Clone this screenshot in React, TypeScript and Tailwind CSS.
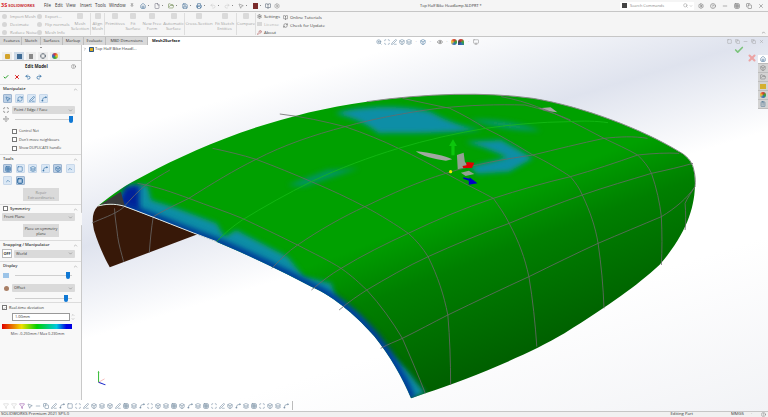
import React from 'react';
import {
  Check, X, Undo2, Redo2, Pin, ChevronUp, ChevronDown, Settings, CircleHelp, Search, Minus, Square, House, File,
  FolderOpen, Save, Printer, MousePointer2, BookOpen, RefreshCw, Wrench, Eye, ZoomIn, Monitor, Box, Copy, Filter,
  PenLine, Move, Grid3x3, Spline, ClipboardList, Scan, Layers, Crosshair,
} from 'lucide-react';

const font = "font-['Open_Sans','Liberation_Sans',sans-serif]";

const SURFACE =
  'M20 408 C60 370 90 345 140 315 C280 225 480 130 700 95 C850 70 1000 65 1120 85 C1250 110 1400 180 1490 245 C1520 265 1530 290 1530 340 C1530 410 1510 490 1440 585 C1380 650 1320 700 1200 790 C1100 860 950 930 848 970 L812 985 C790 920 760 860 720 800 C680 745 620 680 560 650 C480 600 400 555 320 515 C240 480 170 445 85 408 C60 400 40 402 20 408Z';

const wires = [
  'M5 459 C30 445 60 435 83 414 C105 385 120 365 144 342 C165 325 185 312 202 300',
  'M120 340 C170 350 210 368 250 385 C300 408 345 425 385 445 C430 470 480 498 525 525 C565 550 605 572 635 595 C665 620 680 638 700 660 C735 705 765 755 790 805 C810 860 830 915 848 970',
  'M310 235 C350 245 385 255 420 268 C470 290 515 312 560 335 C610 360 655 385 695 410 C735 435 775 465 805 490 C825 510 842 535 855 560 C880 620 895 675 905 735 C910 805 912 875 912 945',
  'M480 132 C540 140 595 155 645 170 C695 190 740 212 780 235 C825 260 865 285 900 310 C945 340 985 362 1020 385 C1035 410 1050 435 1060 460 C1085 515 1100 565 1110 620 C1120 690 1126 760 1130 830',
  'M790 85 C830 95 870 105 910 115 C945 135 975 155 1000 175 C1045 200 1085 230 1120 255 C1155 275 1190 300 1215 320 C1228 338 1238 355 1245 375 C1265 425 1278 470 1285 520 C1293 585 1298 650 1300 715',
  'M1040 80 C1075 88 1105 98 1130 110 C1160 122 1185 136 1210 150 C1240 168 1270 186 1300 205 C1330 222 1360 238 1385 255 C1400 272 1412 290 1420 310 C1433 355 1441 398 1445 440 C1447 490 1447 540 1445 585',
  'M1490 245 C1510 258 1520 272 1525 290 C1531 315 1532 335 1530 350 C1520 370 1510 385 1505 400 C1507 430 1507 455 1505 480',
  'M150 548 C152 515 155 475 160 440 C185 422 215 405 250 385 C310 340 365 300 420 268 C490 225 565 195 645 170 C720 145 800 128 880 115 C960 105 1030 103 1100 105 C1145 118 1180 132 1215 150',
  'M460 595 C480 570 500 545 525 525 C580 480 640 440 695 410 C765 370 830 335 900 310 C975 282 1045 268 1120 255 C1180 238 1240 220 1300 205 C1340 200 1375 198 1410 205',
  'M560 660 C585 635 610 612 635 595 C690 555 750 520 805 490 C875 450 945 415 1020 385 C1085 360 1150 338 1215 320 C1275 300 1330 278 1385 255 C1425 250 1460 248 1490 250',
  'M630 720 C655 695 680 675 700 660 C750 625 800 590 855 560 C920 525 990 490 1060 460 C1120 430 1185 400 1245 375 C1305 350 1365 330 1420 310 C1460 300 1495 290 1525 280',
  'M735 835 C755 822 772 815 790 805 C830 782 868 757 905 735 C975 695 1045 655 1110 620 C1170 585 1230 550 1285 520 C1340 492 1395 465 1445 440 C1480 415 1510 385 1530 350',
  'M62 415 C63 445 68 475 70 500 C73 525 80 552 85 575',
];

// model surface, drawn in zoomed reference coordinates
const Model = () => (
  <svg
    viewBox="0 0 1568 1020"
    preserveAspectRatio="none"
    className="absolute left-[8px] top-[33px] h-[340px] w-[620px]"
  >
    <defs>
      <linearGradient id="green" gradientUnits="userSpaceOnUse" x1="970" y1="400" x2="1160" y2="820">
        <stop offset="0" stopColor="#00a000" />
        <stop offset="0.35" stopColor="#007f00" />
        <stop offset="1" stopColor="#006000" />
      </linearGradient>
      <clipPath id="surface">
        <path d={SURFACE} />
      </clipPath>
      <filter id="soft" x="-20%" y="-20%" width="140%" height="140%">
        <feGaussianBlur stdDeviation="7 8" />
      </filter>
    </defs>
    <path d="M20 408 C5 425 5 450 10 480 C20 520 35 560 50 592 L272 493 L85 408 C60 400 40 402 20 408Z" fill="#371808" />
    <path d={SURFACE} fill="url(#green)" />
    <g clipPath="url(#surface)">
      <g filter="url(#soft)" fill="#0a8ea6">
        <path d="M620 130 C680 105 800 105 860 125 C900 150 940 170 990 180 C900 190 800 190 730 190 C700 160 660 140 620 130Z" />
        <path d="M960 150 C1020 145 1090 160 1140 182 C1080 185 1020 170 960 150Z" opacity="0.7" />
        <path d="M950 215 L1040 210 L1120 265 L1060 305 L980 312 L960 290 L1055 262 L1000 235Z" />
        <path d="M500 345 L600 300 L680 295 L590 330 L540 350Z" opacity="0.6" />
        <path d="M60 400 L100 345 L145 345 L155 390 L220 415 L320 460 L340 500 L370 480 L500 560 L540 620 L610 640 L620 680 L680 740 L740 830 L800 900 L848 970 L812 985 L720 800 L560 650 L320 515Z" />
      </g>
      <path
        d="M85 408 C170 445 240 480 320 515 C400 555 480 600 560 650 C620 680 680 745 720 800 C760 860 790 920 812 985"
        fill="none"
        stroke="#00409c"
        strokeWidth="26"
        filter="url(#soft)"
      />
      <path d="M70 400 L90 350 L125 345 L125 420Z" fill="#00209a" filter="url(#soft)" />
      <path d="M20 408 L78 365 L88 408 C60 400 40 402 20 408Z" fill="#3a3a3a" />
      <path d="M1135 115 L1165 112 L1182 127 L1150 122Z" fill="#a8a8a8" />
    </g>
    <path
      d="M700 95 C850 70 1000 65 1120 85 C1250 110 1400 180 1490 245"
      fill="none"
      stroke="#8a8a8a"
      strokeWidth="1"
      vectorEffect="non-scaling-stroke"
    />
    <g fill="none" stroke="#6a6a6a" strokeWidth="0.8">
      {wires.map((d) => (
        <path key={d} d={d} vectorEffect="non-scaling-stroke" />
      ))}
      <path
        d="M320 515 C340 490 360 470 385 450 C440 410 500 370 560 335 C630 295 705 262 780 235 C850 210 925 190 1000 175 C1070 163 1140 156 1210 155 C1250 152 1280 153 1310 158"
        stroke="#16bb16"
        vectorEffect="non-scaling-stroke"
      />
    </g>
    <path d="M20 408 C40 402 60 400 85 408 C170 445 240 480 320 515" fill="none" stroke="#e6e6e6" strokeWidth="1" vectorEffect="non-scaling-stroke" />
    {/* manipulator */}
    <path d="M824 244 C860 248 900 258 916 268 L900 272 C870 268 840 258 824 244Z" fill="#a2a8a2" />
    <path d="M928 255 L945 248 L948 275 L958 290 L930 298Z" fill="#93a093" />
    <path d="M938 308 L958 302 L972 312 L950 318Z" fill="#93a093" />
    <path d="M918 208 L928 228 L922 228 L922 256 L914 256 L914 228 L908 228Z" fill="#0cc60c" />
    <path d="M942 288 L952 286 L952 276 L972 278 L966 294 L944 294Z" fill="#e00000" />
    <path d="M944 322 L960 326 L960 322 L980 340 L958 344 L958 332 L944 326Z" fill="#0000c8" />
    <ellipse cx="912" cy="305" rx="4" ry="5" fill="#f4f000" />
  </svg>
);

const Triad = () => (
  <svg viewBox="0 0 14 18" className="absolute left-[14px] top-[333px] h-[16px] w-[12px]">
    <path d="M3 14 L3 3" stroke="#10b010" strokeWidth="1" />
    <path d="M3 14 L11 17" stroke="#1020c8" strokeWidth="1.2" />
    <path d="M3 14 L10 10" stroke="#f09090" strokeWidth="0.7" />
    <path d="M2 3 L3 0.5 L4 3Z" fill="#10b010" />
  </svg>
);

const menu = [
  { label: 'File', w: 'w-[11px]' },
  { label: 'Edit', w: 'w-[11px]' },
  { label: 'View', w: 'w-[14px]' },
  { label: 'Insert', w: 'w-[15px]' },
  { label: 'Tools', w: 'w-[14px]' },
  { label: 'Window', w: 'w-[20px]' },
];

const quick = [
  <House key="h" size={6} className="text-[#2a5d8a]" />,
  <File key="n" size={6} className="text-[#667]" />,
  <FolderOpen key="o" size={6} className="text-[#5c7a3a]" />,
  <Save key="s" size={6} className="text-[#2a5d8a]" />,
  <Printer key="p" size={6} className="text-[#2a5d8a]" />,
  <Undo2 key="u" size={6} className="text-[#c4c4c4]" />,
  <Redo2 key="r" size={6} className="text-[#c4c4c4]" />,
  <MousePointer2 key="c" size={6} className="text-[#777]" />,
  <span key="x" className="h-[6px] w-[5px] bg-[#7a2b2b]" />,
];

const TitleBar = () => (
  <div className="flex h-[11px] shrink-0 items-center bg-[#f5f5f5] text-[4.4px] text-[#333]">
    <div className="ml-[1px] flex w-[43px] shrink-0 items-center gap-[1px]">
      <span className="text-[5.5px] font-bold leading-none text-[#d8232a]">3S</span>
      <span className="text-[4px] font-bold leading-none text-[#c8282c]">SOLIDWORKS</span>
    </div>
    <div className="flex w-[94px] shrink-0 items-center">
      {menu.map((m) => (
        <span key={m.label} className={m.w}>
          {m.label}
        </span>
      ))}
      <Pin size={4} className="ml-[1px] text-[#555]" />
    </div>
    <div className="flex w-[282px] shrink-0 items-center">
      {quick.map((icon, i) => (
        <span key={i} className="flex h-[8px] w-[14px] items-center">
          <span className="flex w-[10px] justify-center">{icon}</span>
          <span className="h-[1px] w-[1px] bg-[#888]" />
        </span>
      ))}
      <BookOpen size={6} className="ml-[1px] text-[#456]" />
      <Settings size={6} className="ml-[3px] text-[#888]" />
    </div>
    <span className="w-[200px] shrink-0 text-[3.9px]">Top Half Bike Headlamp.SLDPRT *</span>
    <div className="flex h-[8px] w-[74px] shrink-0 items-center bg-white pl-[2px] text-[#888]">
      <span className="h-[5px] w-[5px] bg-[#444]" />
      <span className="ml-[3px] flex-1 text-[3.9px]">Search Commands</span>
      <Search size={5} />
      <ChevronDown size={4} className="ml-[1px] mr-[1px]" />
    </div>
    <div className="flex items-center pl-[1px] text-[#666]">
      {[Settings, CircleHelp, Minus, Grid3x3, Copy, X].map((Icon, i) => (
        <span key={i} className="flex w-[12px] justify-center">
          <Icon size={6} />
        </span>
      ))}
    </div>
  </div>
);

const RibbonItem = ({ label }: { label: string }) => (
  <div className="flex items-center gap-[3px] text-[#a3a3a3]">
    <span className="h-[5px] w-[5px] shrink-0 rounded-full bg-[#d6d6d6]" />
    <span>{label}</span>
  </div>
);

const RibbonTool = ({ lines, width }: { lines: string[]; width: string }) => (
  <div className={`flex shrink-0 flex-col items-center pt-[1px] leading-[5.2px] text-[#a3a3a3] ${width}`}>
    <span className="mb-[2px] h-[6px] w-[6px] rounded-[1px] bg-[#dadada]" />
    {lines.map((l) => (
      <span key={l}>{l}</span>
    ))}
  </div>
);

const Divider = () => <div className="my-[1px] w-px shrink-0 bg-[#dedede]" />;

const Ribbon = () => (
  <div className="flex h-[26px] shrink-0 border-y border-[#c6c6c6] bg-[#f5f5f5] text-[4.3px]">
    <div className="flex w-[37px] shrink-0 flex-col justify-around pl-[2px]">
      <RibbonItem label="Import Mesh" />
      <RibbonItem label="Decimate" />
      <RibbonItem label="Reduce Noise" />
    </div>
    <div className="flex w-[33px] shrink-0 flex-col justify-around">
      <RibbonItem label="Export..." />
      <RibbonItem label="Flip normals" />
      <RibbonItem label="Mesh Info" />
    </div>
    <RibbonTool lines={['Mesh', 'Selection']} width="w-[20px]" />
    <Divider />
    <RibbonTool lines={['Align', 'Mesh']} width="w-[13px]" />
    <Divider />
    <RibbonTool lines={['Primitives']} width="w-[20px]" />
    <RibbonTool lines={['Fit', 'Surface']} width="w-[16px]" />
    <RibbonTool lines={['New Free', 'Form']} width="w-[22px]" />
    <RibbonTool lines={['Automatic', 'Surface']} width="w-[21px]" />
    <Divider />
    <RibbonTool lines={['Cross-Section']} width="w-[28px]" />
    <RibbonTool lines={['Fit Sketch', 'Entities']} width="w-[23px]" />
    <Divider />
    <RibbonTool lines={['Compare']} width="w-[18px]" />
    <Divider />
    <div className="flex w-[27px] shrink-0 flex-col justify-around pl-[1px] text-[#444]">
      <div className="flex items-center gap-[2px]">
        <Settings size={5} />
        Settings
      </div>
      <div className="flex items-center gap-[2px] text-[#b4b4b4]">
        <span className="h-[4px] w-[5px] bg-[#d8d8d8]" />
        License
      </div>
      <div className="flex items-center gap-[2px]">
        <Wrench size={5} className="text-[#a03030]" />
        About
      </div>
    </div>
    <div className="flex flex-col gap-[2px] pt-[2px] text-[#444]">
      <div className="flex items-center gap-[2px]">
        <BookOpen size={5} />
        Online Tutorials
      </div>
      <div className="flex items-center gap-[2px]">
        <RefreshCw size={5} />
        Check for Update
      </div>
    </div>
    <ChevronUp size={5} className="ml-auto mr-[2px] mt-[18px] text-[#555]" />
  </div>
);

const tabs = [
  { label: 'Features', w: 'w-[20px]' },
  { label: 'Sketch', w: 'w-[19px]' },
  { label: 'Surfaces', w: 'w-[22px]' },
  { label: 'Markup', w: 'w-[21px]' },
  { label: 'Evaluate', w: 'w-[22px]' },
  { label: 'MBD Dimensions', w: 'w-[42px]' },
];

const Tabs = () => (
  <div className="absolute left-0 top-0 z-10 flex h-[8px] items-center bg-[#d9d9d9] pl-[2px] text-[4px] text-[#333]">
    {tabs.map((t) => (
      <span key={t.label} className={`flex h-full items-center justify-center border-r border-[#bdbdbd] ${t.w}`}>
        {t.label}
      </span>
    ))}
    <span className="flex h-[9px] w-[36px] items-center justify-center bg-white font-bold text-[#222]">Mesh2Surface</span>
  </div>
);

const SectionHead = ({ title, children }: { title: string; children?: React.ReactNode }) => (
  <div className="flex h-[9px] items-center justify-between border-t border-[#dcdcdc] px-[3px] text-[4.1px] font-semibold text-[#333]">
    <span className="flex items-center gap-[1px]">
      {children}
      {title}
    </span>
    <ChevronUp size={5} className="text-[#777]" />
  </div>
);

const Select = ({ label, className = '' }: { label: string; className?: string }) => (
  <div className={`flex h-[8px] items-center justify-between rounded-[1px] bg-[#dadada] px-[2px] text-[3.9px] text-[#333] ${className}`}>
    <span>{label}</span>
    <ChevronDown size={5} className="text-[#666]" />
  </div>
);

const Slider = ({ rest }: { rest: string }) => (
  <div className="flex h-[8px] flex-1 items-center">
    <div className="h-px flex-1 bg-[#cfcfcf]" />
    <div className="h-[7px] w-[4px] rounded-b-[2px] bg-[#0f78d4]" />
    <div className={`h-px bg-[#cfcfcf] ${rest}`} />
  </div>
);

const Checkbox = ({ label }: { label: string }) => (
  <div className="flex h-[8.5px] items-center gap-[2px] pl-[12px] text-[3.7px] text-[#444]">
    <span className="h-[5px] w-[5px] border border-[#777] bg-white" />
    {label}
  </div>
);

const ToolButton = ({ active = false, children }: { active?: boolean; children: React.ReactNode }) => (
  <div
    className={`flex h-[9px] w-[9px] items-center justify-center rounded-[1px] border ${
      active ? 'border-[#9db4cf] bg-[#bcd0e6]' : 'border-[#c8d8ea] bg-[#dbe8f5]'
    } text-[#1d5f99]`}
  >
    {children}
  </div>
);

const PanelButton = ({ lines, muted = false }: { lines: string[]; muted?: boolean }) => (
  <div className={`ml-[23px] flex h-[13px] w-[36px] flex-col items-center justify-center bg-[#dadada] text-[3.7px] leading-[5px] ${muted ? 'text-[#8c8c8c]' : 'text-[#333]'}`}>
    {lines.map((l) => (
      <span key={l}>{l}</span>
    ))}
  </div>
);

const PanelTab = ({ active = false, children }: { active?: boolean; children: React.ReactNode }) => (
  <span className={`flex h-[8px] w-[10px] items-center justify-center ${active ? 'bg-[#cdd9e6]' : 'bg-[#ececec]'}`}>
    {children}
  </span>
);

const Panel = () => (
  <aside className="relative mb-[11px] mt-[7px] flex w-[82px] shrink-0 flex-col border-r border-[#c9c9c9] bg-[#f8f8f8]">
    <div className="flex h-[9px] items-center justify-center pb-[3px]">
      <span className="h-px w-[2px] bg-[#999]" />
    </div>
    <div className="flex h-[8px] items-end gap-[2px] border-b border-[#c8c8c8] pl-[2px]">
      <PanelTab>
        <span className="h-[5px] w-[5px] rounded-[1px] bg-[#d3a32a]" />
      </PanelTab>
      <PanelTab active>
        <span className="h-[5px] w-[5px] bg-[#3e6a94]" />
      </PanelTab>
      <PanelTab>
        <span className="h-[5px] w-[4px] bg-[#888]" />
      </PanelTab>
      <PanelTab>
        <Crosshair size={6} className="text-[#3c4a58]" />
      </PanelTab>
      <PanelTab>
        <span className="h-[6px] w-[6px] rounded-full bg-[conic-gradient(#d33,#ec3,#3a3,#36c,#d33)]" />
      </PanelTab>
    </div>
    <div className="relative flex h-[11px] items-center pl-[25px] text-[4.3px] font-bold text-[#222]">
      Edit Model
      <CircleHelp size={5} className="absolute right-[5px] text-[#666]" />
    </div>
    <div className="flex h-[10px] items-center gap-[5px] pl-[3px]">
      <Check size={6} strokeWidth={4} className="text-[#2aa02a]" />
      <X size={6} strokeWidth={4} className="text-[#d92020]" />
      <Undo2 size={6} strokeWidth={3} className="text-[#2a6aa0]" />
      <Redo2 size={6} strokeWidth={3} className="text-[#2a6aa0]" />
    </div>
    <div className="h-[2px]" />
    <SectionHead title="Manipulate" />
    <div className="flex h-[13px] items-start gap-[3px] pl-[3px] pt-[1px]">
      <ToolButton active>
        <MousePointer2 size={6} />
      </ToolButton>
      <ToolButton>
        <RefreshCw size={6} />
      </ToolButton>
      <ToolButton>
        <PenLine size={6} />
      </ToolButton>
      <ToolButton>
        <Spline size={6} />
      </ToolButton>
    </div>
    <div className="flex items-center pl-[3px] pr-[6px]">
      <span className="w-[9px]">
        <Scan size={6} className="text-[#333]" />
      </span>
      <Select label="Point / Edge / Face" className="flex-1" />
    </div>
    <div className="mt-[1px] flex items-center pl-[3px] pr-[8px]">
      <span className="w-[12px]">
        <Move size={6} className="text-[#777]" />
      </span>
      <Slider rest="w-0" />
    </div>
    <div className="h-[4px]" />
    <Checkbox label="Control Net" />
    <Checkbox label="Don't move neighbours" />
    <Checkbox label="Show DUPLICATE handle" />
    <div className="h-[1.5px]" />
    <SectionHead title="Tools" />
    <div className="flex flex-wrap gap-x-[3.5px] gap-y-[3px] pl-[3px] pt-[1px]">
      <ToolButton active>
        <Grid3x3 size={6} />
      </ToolButton>
      <ToolButton>
        <Square size={6} />
      </ToolButton>
      <ToolButton>
        <Layers size={6} />
      </ToolButton>
      <ToolButton>
        <Spline size={6} />
      </ToolButton>
      <ToolButton active>
        <Box size={6} />
      </ToolButton>
      <ToolButton>
        <ChevronUp size={6} />
      </ToolButton>
      <ToolButton>
        <ChevronUp size={6} />
      </ToolButton>
      <ToolButton active>
        <Square size={6} strokeWidth={4} />
      </ToolButton>
    </div>
    <div className="h-[3px]" />
    <PanelButton lines={['Repair', 'Extraordinaries']} muted />
    <div className="h-[3px]" />
    <SectionHead title="Symmetry">
      <span className="mr-[1px] h-[5px] w-[5px] border border-[#777] bg-white" />
    </SectionHead>
    <div className="pl-[2px] pr-[6px]">
      <Select label="Front Plane" />
    </div>
    <div className="h-[3px]" />
    <PanelButton lines={['Place on symmetry', 'plane']} />
    <div className="h-[3px]" />
    <SectionHead title="Snapping / Manipulator" />
    <div className="flex items-center gap-[2px] pl-[2px] pr-[6px]">
      <span className="flex h-[9px] w-[10px] items-center justify-center border border-[#bbb] bg-white text-[3.8px] font-bold text-[#333]">OFF</span>
      <Select label="World" className="flex-1" />
    </div>
    <div className="h-[3px]" />
    <SectionHead title="Display" />
    <div className="flex items-center pl-[3px] pr-[9px] pt-[1px]">
      <span className="w-[12px]">
        <span className="block h-[5px] w-[6px] bg-[#9cc4e8]" />
      </span>
      <Slider rest="w-[2px]" />
    </div>
    <div className="mt-[5px] flex items-center pl-[4px] pr-[6px]">
      <span className="mr-[3px] h-[5px] w-[5px] rounded-full bg-[#a97f66]" />
      <Select label="Offset" className="flex-1" />
    </div>
    <div className="flex items-center pl-[15px] pr-[9px] pt-[2px]">
      <Slider rest="w-[4px]" />
    </div>
    <div className="flex h-[10px] items-center gap-[2px] border-t border-[#dcdcdc] pl-[2px] text-[3.9px] text-[#333]">
      <span className="flex h-[5px] w-[5px] items-center justify-center border border-[#777] bg-white">
        <Check size={4} />
      </span>
      Real-time deviation
    </div>
    <div className="mt-[1px] flex items-center gap-[1px] pl-[12px] pr-[6px]">
      <span className="flex h-[8px] flex-1 items-center border border-[#999] bg-white pl-[2px] text-[3.9px] text-[#333]">1.00mm</span>
      <span className="flex flex-col text-[#777]">
        <ChevronUp size={4} />
        <ChevronDown size={4} />
      </span>
    </div>
    <div className="ml-[2px] mr-[9px] mt-[3px] h-[5px] bg-[linear-gradient(to_right,#e00000,#f0e000_28%,#00d000_50%,#00c8e0_78%,#0000e0_92%)]" />
    <div className="mt-[2px] pr-[6px] text-center text-[3.7px] text-[#444]">Min: -0.250mm / Max 0.230mm</div>
    <div className="absolute left-[81px] top-[168px] flex h-[14px] w-[4px] items-center justify-center rounded-r-[1px] border border-l-0 border-[#d0d0d0] bg-[#f8f8f8]">
      <span className="h-[2px] w-[1px] bg-[#888]" />
    </div>
  </aside>
);

const headsUp = [ZoomIn, Scan, PenLine, Box, Layers];

const HeadsUp = () => (
  <div className="absolute left-[294px] top-[1px] flex h-[7px] items-center gap-[1.5px] text-[#5f7f99]">
    {headsUp.map((Icon, i) => (
      <Icon key={i} size={6} />
    ))}
    <span className="mx-[2px] text-[5px] text-[#999]">·</span>
    <Box size={6} className="text-[#3c6f99]" />
    <span className="mx-[2px] text-[5px] text-[#999]">·</span>
    <Eye size={6} className="ml-[2px] text-[#555]" />
    <span className="mx-[2px] text-[5px] text-[#999]">·</span>
    <span className="h-[6px] w-[6px] rounded-full bg-[conic-gradient(#d33,#3a3,#36c,#ec3,#d33)]" />
    <span className="h-[6px] w-[6px] rounded-t-full bg-[conic-gradient(#d33,#3a3,#36c,#444,#d33)]" />
    <span className="mx-[2px] text-[5px] text-[#999]">·</span>
    <Monitor size={6} className="text-[#888]" />
  </div>
);

const WindowControls = () => (
  <>
    <div className="absolute right-[4px] top-[1px] flex h-[7px] items-center gap-[3px] text-[#9a9a9a]">
      <Square size={5} />
      <Copy size={5} />
      <Minus size={5} />
      <Copy size={5} />
      <X size={5} />
    </div>
    <Check size={10} strokeWidth={4} className="absolute left-[652px] top-[8px] text-[#7cc47c]" />
    <X size={10} strokeWidth={5} className="absolute left-[665px] top-[16px] text-[#eca4a4]" />
  </>
);

const taskIcons = [
  <House key="h" size={6} className="text-[#2a5d8a]" />,
  <Box key="b" size={6} className="text-[#777]" />,
  <FolderOpen key="f" size={6} className="text-[#777]" />,
  <span key="a" className="h-[5px] w-[6px] bg-[#d4b030]" />,
  <span key="c" className="h-[6px] w-[6px] rounded-full bg-[conic-gradient(#d33,#3a3,#36c,#ec3,#d33)]" />,
  <ClipboardList key="l" size={6} className="text-[#4b7290]" />,
];

const TaskPane = () => (
  <div className="absolute right-0 top-[18px] flex w-[10px] flex-col">
    {taskIcons.map((icon, i) => (
      <div
        key={i}
        className={`flex h-[9px] items-center justify-center border-b border-[#bcbcbc] ${i === 0 ? 'bg-white' : 'bg-[#d3d3d3]'}`}
      >
        {icon}
      </div>
    ))}
  </div>
);

const bottomIcons = [
  Filter, Filter, Filter, MousePointer2, Minus, Copy, PenLine, Spline, Square, Scan, PenLine, Box, Layers, Box, PenLine,
  Grid3x3, Layers, Spline, Scan, Box, Layers, Grid3x3, Box, Spline, Layers, Grid3x3, Scan, PenLine, Box, Spline, Layers,
  Grid3x3, Scan, Box, Layers, Spline,
];

const BottomBar = () => (
  <div className="absolute bottom-0 left-[3px] z-10 flex h-[11px] items-center gap-[2px] text-[#5f7890]">
    {bottomIcons.map((Icon, i) => (
      <Icon key={i} size={6} className={i < 2 ? 'text-[#c8c8c8]' : i === 2 ? 'text-[#8a3f9c]' : ''} />
    ))}
    <span className="ml-[1px] h-[9px] w-px bg-[#bbb]" />
  </div>
);

const StatusBar = () => (
  <div className="flex h-[6px] shrink-0 items-center border-t border-[#c6c6c6] bg-[#f1f1f1] pl-[1px] text-[4.2px] leading-none text-[#333]">
    <span>SOLIDWORKS Premium 2021 SP5.0</span>
    <span className="ml-auto">Editing Part</span>
    <span className="ml-[38px]">MMGS</span>
    <span className="ml-[7px] text-[#777]">·</span>
    <CircleHelp size={5} className="ml-[9px] mr-[2px] text-[#777]" />
  </div>
);

export default function App() {
  return (
    <div className={`flex h-[417px] w-[768px] flex-col overflow-hidden whitespace-nowrap bg-white ${font}`}>
      <TitleBar />
      <Ribbon />
      <main className="relative flex min-h-0 flex-1">
        <Tabs />
        <Panel />
        <section className="relative flex-1 bg-[linear-gradient(163deg,#ffffff_18%,#dfe3ee_36%,#ffffff_52%,#ffffff_70%,#f2f3f6_100%)]">
          <div className="absolute left-[1px] top-[9px] flex items-center gap-[1px] text-[4.2px] text-[#333]">
            <ChevronDown size={4} className="-rotate-90 text-[#333]" />
            <span className="ml-[1px] h-[5px] w-[5px] rounded-[1px] bg-[#d8a91f] ring-1 ring-inset ring-[#2d5a8c]" />
            Top Half Bike Headl...
          </div>
          <HeadsUp />
          <WindowControls />
          <TaskPane />
          <Model />
          <Triad />
        </section>
        <BottomBar />
      </main>
      <StatusBar />
    </div>
  );
}
